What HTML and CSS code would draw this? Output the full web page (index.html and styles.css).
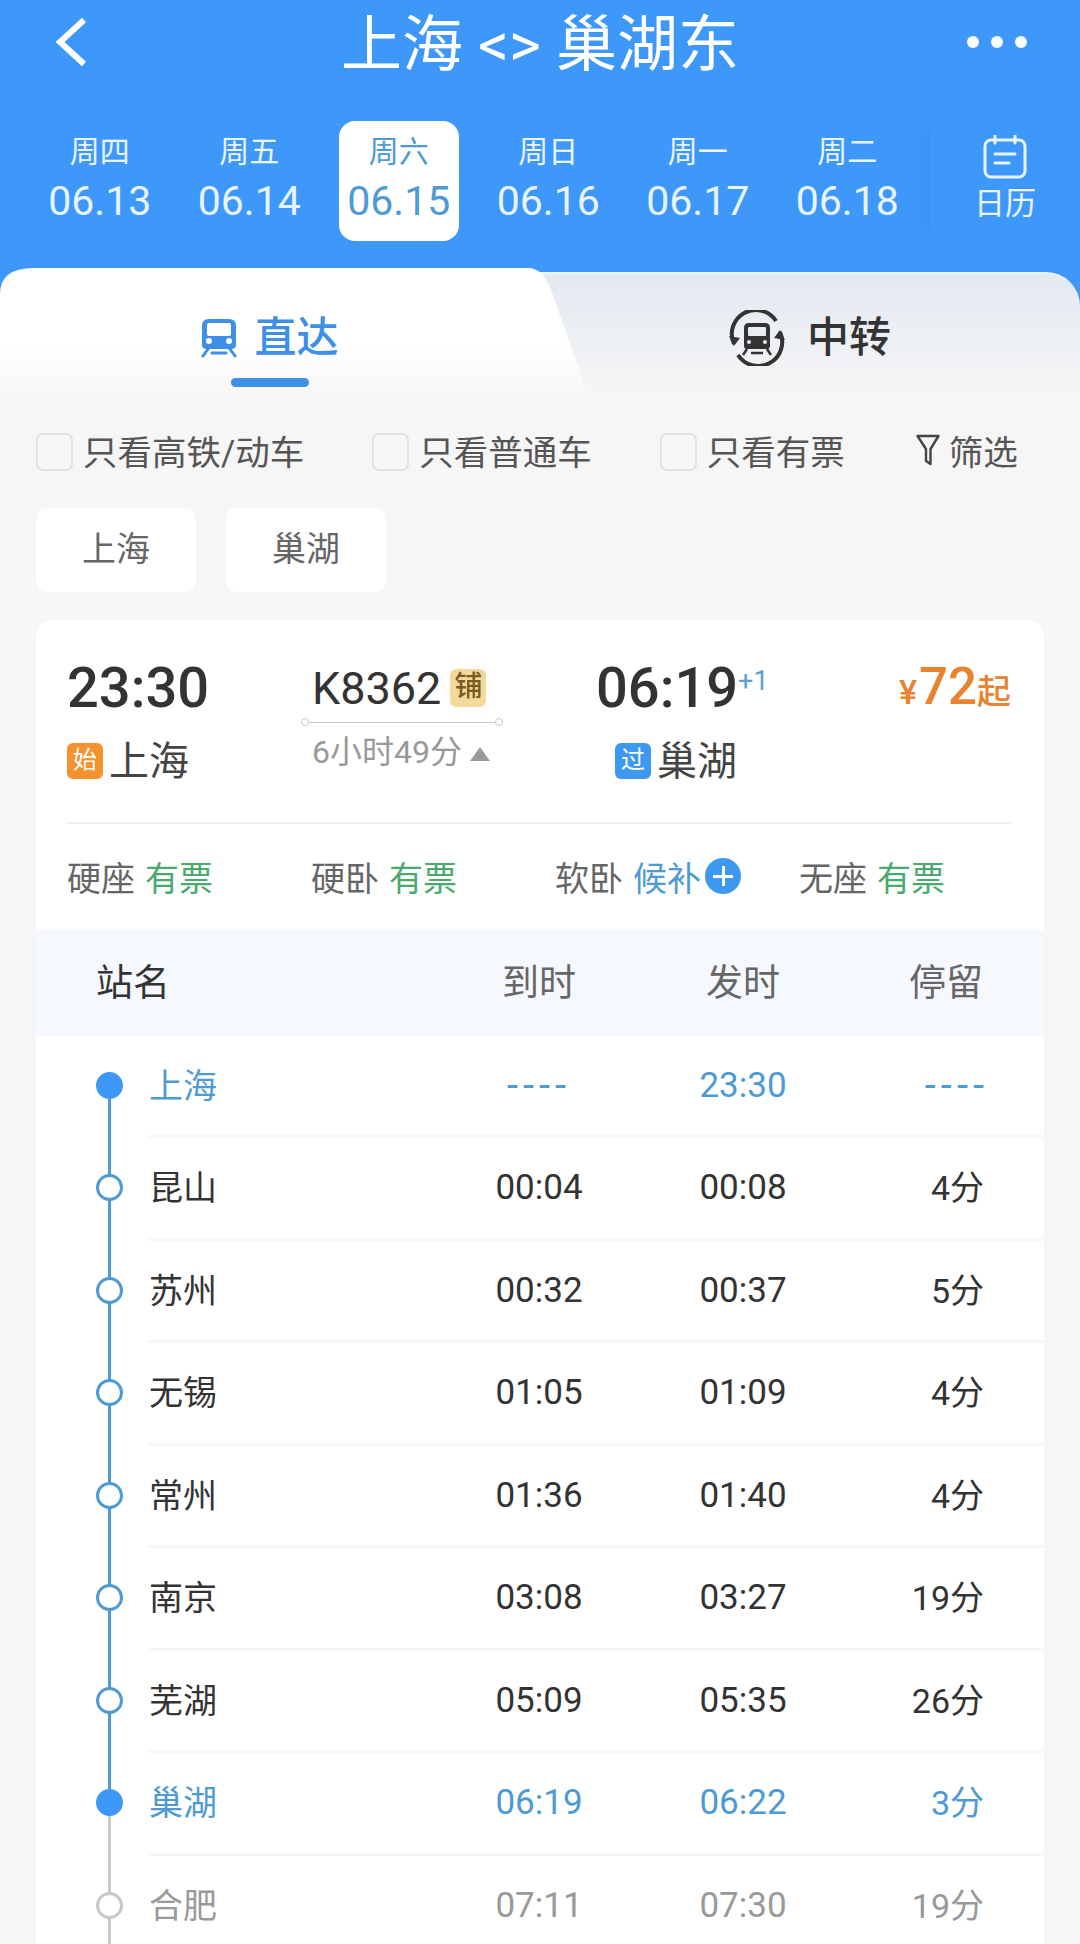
FILE: index.html
```html
<!DOCTYPE html>
<html lang="zh-CN">
<head>
    <meta charset="UTF-8">
    <meta name="viewport" content="width=device-width, initial-scale=1.0">
    <title>上海 &lt;&gt; 巢湖东</title>
    <link rel="stylesheet" href="styles.css">
</head>
<body>
    <div class="top">
        <div class="topbar">
            <svg class="back" viewBox="0 0 34 50" width="34" height="50"><path d="M30 3 L6 25 L30 47" fill="none" stroke="#fff" stroke-width="6"/></svg>
            <div class="title">上海 &lt;&gt; 巢湖东</div>
            <div class="more"><i></i><i></i><i></i></div>
        </div>

        <div class="dates">
            <div class="date"><span class="week">周四</span><span class="day">06.13</span></div>
            <div class="date"><span class="week">周五</span><span class="day">06.14</span></div>
            <div class="date active"><span class="week">周六</span><span class="day">06.15</span></div>
            <div class="date"><span class="week">周日</span><span class="day">06.16</span></div>
            <div class="date"><span class="week">周一</span><span class="day">06.17</span></div>
            <div class="date"><span class="week">周二</span><span class="day">06.18</span></div>
            <div class="calendar">
                <svg viewBox="0 0 44 44" width="44" height="44" fill="none" stroke="#eaf4ff" stroke-width="3" stroke-linecap="round">
                    <rect x="2" y="5" width="40" height="37" rx="6"/>
                    <path d="M12 1 V8 M32 1 V8 M12 19 H32 M12 28 H26"/>
                </svg>
                <span>日历</span>
            </div>
        </div>

        <div class="tabs">
            <div class="tab tab-direct">
                <div class="tab-label">
                    <svg viewBox="0 0 36 40" width="36" height="40">
                        <path d="M8 1 H28 Q35 1 35 8 V27 Q35 31 30 31 H6 Q1 31 1 27 V8 Q1 1 8 1 Z" fill="#3d8fe8"/>
                        <rect x="6" y="5" width="24" height="13" rx="2" fill="#fff"/>
                        <circle cx="8" cy="23" r="3" fill="#fff"/>
                        <circle cx="28" cy="23" r="3" fill="#fff"/>
                        <path d="M7 31 L2 38 M29 31 L34 38 M11 35 H25" stroke="#3d8fe8" stroke-width="3" stroke-linecap="round"/>
                    </svg>
                    <span>直达</span>
                </div>
                <b class="tab-line"></b>
            </div>
            <div class="tab tab-transfer">
                <svg viewBox="0 0 56 56" width="56" height="56" fill="none">
                    <path d="M5 34 A24 24 0 0 1 47 11 M51 22 A24 24 0 0 1 9 45" stroke="#333" stroke-width="4"/>
                    <path d="M0 26 L5 36 L11 28 Z M56 30 L51 20 L45 28 Z" fill="#333"/>
                    <path d="M20 13 H36 Q41 13 41 18 V36 Q41 39 38 39 H18 Q15 39 15 36 V18 Q15 13 20 13 Z" fill="#333"/>
                    <rect x="19" y="17" width="18" height="9" rx="1" fill="#e9edf2"/>
                    <circle cx="20" cy="32" r="2" fill="#e9edf2"/>
                    <circle cx="36" cy="32" r="2" fill="#e9edf2"/>
                    <path d="M18 39 L14 45 M38 39 L42 45 M22 43 H34" stroke="#333" stroke-width="2.5"/>
                </svg>
                <span>中转</span>
            </div>
        </div>
    </div>

    <div class="filters">
        <label class="check"><i></i>只看高铁/动车</label>
        <label class="check"><i></i>只看普通车</label>
        <label class="check"><i></i>只看有票</label>
        <div class="screen">
            <svg viewBox="0 0 24 32" width="24" height="32" fill="none" stroke="#444" stroke-width="2.4" stroke-linejoin="round"><path d="M1.5 2 H22.5 L14.5 15 V30 L10 27 V15 Z"/></svg>
            <span>筛选</span>
        </div>
    </div>

    <div class="chips">
        <span class="chip">上海</span>
        <span class="chip">巢湖</span>
    </div>

    <div class="card">
        <div class="journey">
            <div class="leg leg-from">
                <div class="time">23:30</div>
                <div class="place"><em class="tag tag-start">始</em>上海</div>
            </div>
            <div class="train">
                <div class="train-no">K8362<em class="berth">铺</em></div>
                <div class="route"><i></i></div>
                <div class="duration">6小时49分<b class="arrow"></b></div>
            </div>
            <div class="leg leg-to">
                <div class="time">06:19<sup>+1</sup></div>
                <div class="place"><em class="tag tag-pass">过</em>巢湖</div>
            </div>
            <div class="price"><small>¥</small>72<span>起</span></div>
        </div>

        <div class="seats">
            <div class="seat">硬座 <span class="yes">有票</span></div>
            <div class="seat">硬卧 <span class="yes">有票</span></div>
            <div class="seat">软卧 <span class="wait">候补</span><b class="plus"></b></div>
            <div class="seat">无座 <span class="yes">有票</span></div>
        </div>

        <div class="table-head">
            <span class="head-name">站名</span>
            <span>到时</span>
            <span>发时</span>
            <span class="cell-stay">停留</span>
        </div>

        <div class="stop current first">
            <div class="rail"><i class="dot"></i></div>
            <div class="stop-body"><span>上海</span><span class="dash">----</span><span>23:30</span><span class="cell-stay dash">----</span></div>
        </div>
        <div class="stop">
            <div class="rail"><i class="dot"></i></div>
            <div class="stop-body"><span>昆山</span><span>00:04</span><span>00:08</span><span class="cell-stay">4分</span></div>
        </div>
        <div class="stop">
            <div class="rail"><i class="dot"></i></div>
            <div class="stop-body"><span>苏州</span><span>00:32</span><span>00:37</span><span class="cell-stay">5分</span></div>
        </div>
        <div class="stop">
            <div class="rail"><i class="dot"></i></div>
            <div class="stop-body"><span>无锡</span><span>01:05</span><span>01:09</span><span class="cell-stay">4分</span></div>
        </div>
        <div class="stop">
            <div class="rail"><i class="dot"></i></div>
            <div class="stop-body"><span>常州</span><span>01:36</span><span>01:40</span><span class="cell-stay">4分</span></div>
        </div>
        <div class="stop">
            <div class="rail"><i class="dot"></i></div>
            <div class="stop-body"><span>南京</span><span>03:08</span><span>03:27</span><span class="cell-stay">19分</span></div>
        </div>
        <div class="stop">
            <div class="rail"><i class="dot"></i></div>
            <div class="stop-body"><span>芜湖</span><span>05:09</span><span>05:35</span><span class="cell-stay">26分</span></div>
        </div>
        <div class="stop current last-ride">
            <div class="rail"><i class="dot"></i></div>
            <div class="stop-body"><span>巢湖</span><span>06:19</span><span>06:22</span><span class="cell-stay">3分</span></div>
        </div>
        <div class="stop later">
            <div class="rail"><i class="dot"></i></div>
            <div class="stop-body"><span>合肥</span><span>07:11</span><span>07:30</span><span class="cell-stay">19分</span></div>
        </div>
    </div>
</body>
</html>
```

FILE: styles.css
```css
* {
    box-sizing: border-box;
}

html, body {
    height: 100%;
    overflow: hidden;
}

body {
    margin: 0;
    background: #f6f6f6;
    font-family: Roboto, 'Noto Sans CJK SC', sans-serif;
    color: #333;
}

em, i {
    font-style: normal;
}

/* blue header */
.top {
    height: 400px;
    background: linear-gradient(#3d98f9 310px, #f6f6f6 310px);
}

.topbar {
    height: 84px;
    padding: 0 53px 0 54px;
    display: flex;
    align-items: center;
}

.title {
    flex: 1;
    margin-top: 5px;
    color: #fff;
    font-size: 61px;
    line-height: 84px;
    text-align: center;
}

.back {
    width: 34px;
    margin-right: 25px;
}

.more {
    display: flex;
    gap: 12px;
}

.more i {
    width: 12px;
    height: 12px;
    border-radius: 50%;
    background: #fff;
}

.dates {
    height: 120px;
    margin-top: 37px;
    padding-left: 25px;
    display: flex;
}

.date {
    width: 149.5px;
    display: flex;
    flex-direction: column;
    align-items: center;
    color: #eaf4ff;
}

.date.active {
    width: 120px;
    margin: 0 14.75px;
    background: #fff;
    border-radius: 16px;
    color: #4d9ad4;
}

.week {
    font-size: 30px;
    line-height: 40px;
    margin-top: 11px;
}

.day {
    font-size: 41px;
    line-height: 50px;
    margin-top: 4px;
}

.calendar {
    flex: 1;
    margin-left: 8px;
    padding-top: 14px;
    display: flex;
    flex-direction: column;
    align-items: center;
    color: #eaf4ff;
    font-size: 31px;
    line-height: 40px;
    box-shadow: -10px 0 10px -8px rgba(40, 110, 200, 0.12);
}

.calendar span {
    margin-top: 5px;
}

/* tabs */
.tabs {
    height: 128px;
    margin-top: 31px;
    display: flex;
    border-top: 2px solid #eaf3fc;
    border-radius: 34px 34px 0 0;
    background: linear-gradient(#e3e9f1, #f6f6f6);
}

.tab {
    font-size: 42px;
    line-height: 60px;
    font-weight: 500;
}

.tab-direct {
    flex: 0 0 590px;
    height: 132px;
    margin-top: -6px;
    padding: 40px 50px 0 0;
    display: flex;
    flex-direction: column;
    align-items: center;
    color: #3d8fe8;
    background: linear-gradient(#fff 55%, #f6f6f6);
    clip-path: path('M0 132 V26 Q0 0 34 0 H528 Q543 0 551 22 L590 132 Z');
}

.tab-label {
    display: flex;
    align-items: center;
    gap: 17px;
}

.tab-line {
    width: 78px;
    height: 9px;
    margin-top: 10px;
    border-radius: 5px;
    background: #3d8fe8;
}

.tab-transfer {
    flex: 1;
    height: 96px;
    padding: 32px 50px 0 0;
    display: flex;
    justify-content: center;
    align-items: center;
    gap: 22px;
}

/* filter row */
.filters {
    height: 38px;
    margin-top: 31px;
    padding-left: 36px;
    display: flex;
    align-items: center;
    gap: 68px;
    font-size: 34.5px;
    color: #555;
}

.check {
    display: flex;
    align-items: center;
    gap: 10px;
}

.check i {
    width: 37px;
    height: 38px;
    margin-top: 4px;
    border: 2px solid #e2e2e2;
    border-radius: 7px;
    background: #f7f7f7;
}

.screen {
    margin-left: 3px;
    display: flex;
    align-items: center;
    gap: 9px;
}

.chips {
    margin-top: 39px;
    padding-left: 36px;
    display: flex;
    gap: 30px;
}

.chip {
    height: 84px;
    padding: 0 46px;
    background: #fff;
    border-radius: 10px;
    font-size: 34px;
    line-height: 82px;
    color: #666;
}

/* train card */
.card {
    margin: 28px 36px 0;
    background: #fff;
    border-radius: 16px 16px 0 0;
}

.journey {
    margin: 0 33px 0 31px;
    padding: 40px 0 45px;
    display: flex;
    border-bottom: 2px solid #eeeeee;
}

.leg-from {
    width: 234px;
}

.leg-to {
    width: 300px;
    margin-left: 93px;
}

.time {
    font-size: 56px;
    line-height: 56px;
    font-weight: 500;
    color: #333;
    white-space: nowrap;
}

.time sup {
    font-size: 27px;
    line-height: 1;
    font-weight: 400;
    color: #5a9fd0;
    vertical-align: 17px;
}

.place {
    margin-top: 23px;
    height: 38px;
    display: flex;
    align-items: center;
    font-size: 40px;
    color: #444;
}

.leg-to .place {
    padding-left: 19px;
}

.tag {
    width: 36px;
    height: 36px;
    margin: 6px 6px 0 0;
    border-radius: 6px;
    font-size: 24px;
    line-height: 34px;
    text-align: center;
    color: #fff;
}

.tag-start {
    background: #f3922f;
}

.tag-pass {
    background: #3d98f0;
}

.train {
    width: 202px;
}

.train-no {
    height: 56px;
    padding-left: 11px;
    display: flex;
    align-items: center;
    gap: 9px;
    font-size: 45px;
    color: #333;
}

.berth {
    width: 36px;
    height: 38px;
    border-radius: 6px;
    background: #f3da9a;
    font-size: 28px;
    line-height: 36px;
    font-weight: 500;
    text-align: center;
    color: #7a5a24;
}

.route {
    margin-top: 2px;
    display: flex;
    align-items: center;
}

.route::before, .route::after {
    content: "";
    width: 6px;
    height: 6px;
    border: 1px solid #c8c8c8;
    border-radius: 50%;
}

.route i {
    flex: 1;
    height: 1px;
    background: #c8c8c8;
}

.duration {
    margin-top: 6px;
    padding-left: 11px;
    display: flex;
    align-items: center;
    font-size: 32px;
    line-height: 40px;
    color: #999;
    white-space: nowrap;
}

.arrow {
    margin: 4px 0 0 8px;
    border-left: 10px solid transparent;
    border-right: 10px solid transparent;
    border-bottom: 14px solid #999;
}

.price {
    margin-left: auto;
    margin-top: -3px;
    font-size: 51px;
    line-height: 60px;
    font-weight: 500;
    color: #e8832f;
    white-space: nowrap;
}

.price small {
    margin-right: 2px;
    font-size: 34px;
}

.price span {
    font-size: 34px;
}

/* seats */
.seats {
    height: 106px;
    padding: 0 0 2px 31px;
    display: grid;
    grid-template-columns: repeat(4, 244px);
    align-items: center;
    font-size: 34px;
    color: #666;
}

.seat {
    display: flex;
    align-items: center;
    gap: 10px;
}

.yes {
    color: #4aa96c;
}

.wait {
    color: #4d9ad4;
}

.plus {
    width: 36px;
    height: 36px;
    margin-left: -6px;
    border-radius: 50%;
    background:
        linear-gradient(#fff, #fff) center / 20px 3px no-repeat,
        linear-gradient(#fff, #fff) center / 3px 20px no-repeat,
        #3d98f0;
}

/* stop table */
.table-head {
    height: 106px;
    padding: 0 61px 6px 60px;
    display: grid;
    grid-template-columns: 351px 184px 224px 1fr;
    align-items: center;
    background: #f5f9ff;
    font-size: 37px;
    color: #666;
    text-align: center;
}

.head-name {
    text-align: left;
    color: #333;
}

.cell-stay {
    text-align: right;
}

.stop {
    height: 102.5px;
    display: flex;
    color: #333;
    background: #fff;
}

.stop.first {
    height: 102px;
}

.rail {
    width: 111px;
    display: flex;
    align-items: center;
    padding: 0 0 3px 60px;
    background: linear-gradient(#4d9ad4, #4d9ad4) 72px 0 / 3px 100% no-repeat;
}

.first .rail {
    background-position: 72px 100%;
    background-size: 3px 50%;
}

.last-ride .rail {
    background:
        linear-gradient(#4d9ad4 50%, #c8c8c8 50%) 72px 0 / 3px 100% no-repeat;
}

.later .rail {
    background-image: linear-gradient(#c8c8c8, #c8c8c8);
}

.dot {
    width: 27px;
    height: 27px;
    border: 3px solid #4d9ad4;
    border-radius: 50%;
    background: #fff;
}

.current .dot {
    border-color: #3d98f9;
    background: #3d98f9;
}

.later .dot {
    border-color: #c8c8c8;
}

.stop-body {
    flex: 1;
    padding-right: 60px;
    display: grid;
    grid-template-columns: 300px 184px 224px 1fr;
    align-items: center;
    border-bottom: 3px solid #f8f8f8;
    font-size: 35px;
    text-align: center;
}

.stop-body span:first-child {
    margin-top: -4px;
    padding-left: 2px;
    text-align: left;
    font-size: 34px;
}

.stop-body .cell-stay {
    margin-top: -4px;
    font-size: 34px;
    text-align: right;
}

.current {
    color: #4d9ad4;
}

.later {
    color: #999;
}

.stop-body .dash {
    margin-top: 0;
    font-size: 40px;
    letter-spacing: 5px;
}

.stop-body .cell-stay.dash {
    margin-right: -5px;
    font-size: 40px;
}
```
